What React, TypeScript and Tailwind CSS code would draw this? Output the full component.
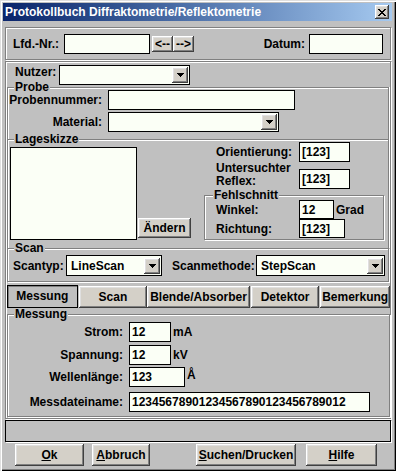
import React from "react";

const raised =
  "bg-[#d4d0c8] shadow-[inset_-1px_-1px_0_#404040,inset_1px_1px_0_#ffffff,inset_-2px_-2px_0_#808080,inset_2px_2px_0_#dfdfdf]";
const field = "bg-[#fbfff6] border border-black flex items-center pl-[2px] leading-none";
const etched = "border border-[#808080] shadow-[inset_1px_1px_0_#ffffff,1px_1px_0_#ffffff]";

function Arrow() {
  return (
    <svg width="7" height="4" viewBox="0 0 7 4" shapeRendering="crispEdges">
      <path d="M0 0H7V1H6V2H5V3H4V4H3V3H2V2H1V1H0Z" fill="#000" />
    </svg>
  );
}

function Combo({ className, value }: { className: string; value?: string }) {
  return (
    <div className={`bg-[#fbfff6] border border-black flex items-center justify-between ${className}`}>
      <span className="pl-[4px] leading-none">{value ?? ""}</span>
      <div className={`${raised} w-[16px] h-[16px] mr-[1px] flex items-center justify-center`}>
        <Arrow />
      </div>
    </div>
  );
}

function Legend({ children, className }: { children: React.ReactNode; className: string }) {
  return (
    <span className={`absolute -top-[6px] px-[1px] bg-[#c0c0c0] leading-[10px] ${className}`}>
      {children}
    </span>
  );
}

function Btn({ className, children }: { className: string; children: React.ReactNode }) {
  return (
    <div className={`${raised} flex items-center justify-center leading-none ${className}`}>
      {children}
    </div>
  );
}

export default function App() {
  return (
    <div className="w-[396px] h-[471px] bg-[#c0c0c0] p-[3px] flex flex-col font-['Liberation_Sans',Arial,sans-serif] font-bold text-[12px] text-black shadow-[inset_1px_1px_0_#dfdfdf,inset_2px_2px_0_#ffffff,inset_-1px_-1px_0_#000000,inset_-2px_-2px_0_#808080]">
      {/* Title bar */}
      <div className="h-[18px] w-[389px] bg-linear-to-r from-[#0a246a] to-[#a6caf0] flex items-center justify-between">
        <span className="text-white pl-[2px] leading-none">
          Protokollbuch Diffraktometrie/Reflektometrie
        </span>
        <div className={`${raised} w-[14px] h-[14px] mr-[3px] flex items-center justify-center`}>
          <svg width="8" height="7" viewBox="0 0 8 7" shapeRendering="crispEdges">
            <path
              d="M0 0H2V1H3V2H5V1H6V0H8V1H7V2H6V3H5V4H6V5H7V6H8V7H6V6H5V5H3V6H2V7H0V6H1V5H2V4H3V3H2V2H1V1H0Z"
              fill="#000"
            />
          </svg>
        </div>
      </div>

      {/* Panel A */}
      <div className={`${etched} ml-[2px] mt-[6px] w-[386px] h-[33px] flex items-center`}>
        <span className="ml-[7px] w-[51px] leading-none">Lfd.-Nr.:</span>
        <div className={`${field} w-[86px] h-[20px]`} />
        <Btn className="ml-[2px] w-[21px] h-[16px]">&lt;--</Btn>
        <Btn className="w-[21px] h-[16px]">--&gt;</Btn>
        <span className="ml-auto leading-none">Datum:</span>
        <div className={`${field} w-[74px] h-[20px] ml-[4px] mr-[7px]`} />
      </div>

      {/* Panel B */}
      <div className={`${etched} ml-[2px] mt-[1px] w-[386px] h-[358px] flex flex-col`}>
        {/* Nutzer */}
        <div className="mt-[3px] h-[20px] flex items-center">
          <span className="ml-[9px] w-[44px] leading-none -mt-[6px]">Nutzer:</span>
          <Combo className="w-[131px] h-[20px]" />
        </div>

        {/* Probe */}
        <div className="relative mt-[2px] mx-[1px] h-[52px] border-t border-x border-[#808080] shadow-[inset_1px_1px_0_#ffffff,1px_0_0_#ffffff] flex flex-col pt-[2px] gap-[2px]">
          <Legend className="left-[6px]">Probe</Legend>
          <div className="h-[20px] flex items-center">
            <span className="w-[94px] text-right leading-none">Probennummer:</span>
            <div className={`${field} w-[187px] h-[20px] ml-[6px]`} />
          </div>
          <div className="h-[20px] flex items-center">
            <span className="w-[94px] text-right leading-none">Material:</span>
            <Combo className="w-[171px] h-[20px] ml-[6px]" />
          </div>
        </div>

        {/* Lageskizze */}
        <div className="relative mx-[1px] h-[109px] border-t border-x border-[#808080] shadow-[inset_1px_1px_0_#ffffff,1px_0_0_#ffffff] flex">
          <Legend className="left-[6px]">Lageskizze</Legend>
          <div className="ml-[2px] mt-[7px] w-[127px] h-[93px] bg-[#fbfff6] border border-black" />
          <Btn className="ml-[1px] mt-[78px] w-[53px] h-[20px]">Ändern</Btn>
          <div className="ml-[13px] flex flex-col">
            <div className="mt-[2px] h-[20px] flex items-center">
              <span className="ml-[12px] w-[83px] leading-none">Orientierung:</span>
              <div className={`${field} w-[51px] h-[20px]`}>[123]</div>
            </div>
            <div className="h-[27px] flex items-start">
              <span className="ml-[12px] w-[83px] leading-[13px]">
                Untersuchter
                <br />
                Reflex:
              </span>
              <div className={`${field} w-[51px] h-[20px] mt-[7px]`}>[123]</div>
            </div>
            <div className={`${etched} relative mt-[6px] w-[180px] h-[45px] flex flex-col pt-[4px]`}>
              <Legend className="left-[8px]">Fehlschnitt</Legend>
              <div className="h-[19px] flex items-center">
                <span className="ml-[11px] w-[83px] leading-none">Winkel:</span>
                <div className={`${field} w-[35px] h-[19px]`}>12</div>
                <span className="ml-[2px] leading-none">Grad</span>
              </div>
              <div className="h-[19px] flex items-center">
                <span className="ml-[11px] w-[83px] leading-none">Richtung:</span>
                <div className={`${field} w-[46px] h-[19px]`}>[123]</div>
              </div>
            </div>
          </div>
        </div>

        {/* Scan */}
        <div className="relative mx-[1px] h-[34px] border border-[#808080] shadow-[inset_1px_1px_0_#ffffff,1px_1px_0_#ffffff] flex items-start">
          <Legend className="left-[6px]">Scan</Legend>
          <div className="mt-[6px] h-[21px] flex items-center">
            <span className="ml-[5px] w-[53px] leading-none">Scantyp:</span>
            <Combo className="w-[96px] h-[21px]" value="LineScan" />
            <span className="ml-[10px] w-[84px] leading-none">Scanmethode:</span>
            <Combo className="w-[129px] h-[21px]" value="StepScan" />
          </div>
        </div>

        {/* Tabs */}
        <div className="mt-[3px] ml-[1px] h-[23px] flex items-end">
          <div className="w-[71px] h-[23px] border border-black bg-[#c0c0c0] shadow-[inset_1px_1px_0_#808080] flex justify-center pt-[4px] leading-none">
            Messung
          </div>
          <Btn className="ml-[1px] w-[69px] h-[22px]">Scan</Btn>
          <Btn className="w-[103px] h-[22px]">Blende/Absorber</Btn>
          <Btn className="ml-[1px] w-[69px] h-[22px]">Detektor</Btn>
          <Btn className="ml-[1px] w-[70px] h-[22px]">Bemerkung</Btn>
        </div>

        {/* Messung group */}
        <div className={`${etched} relative mt-[6px] ml-[1px] w-[383px] h-[103px] flex flex-col pt-[7px]`}>
          <Legend className="left-[6px]">Messung</Legend>
          <div className="h-[20px] flex items-center">
            <span className="w-[115px] text-right leading-none">Strom:</span>
            <div className={`${field} ml-[6px] w-[42px] h-[20px]`}>12</div>
            <span className="ml-[2px] leading-none">mA</span>
          </div>
          <div className="mt-[3px] h-[20px] flex items-center">
            <span className="w-[115px] text-right leading-none">Spannung:</span>
            <div className={`${field} ml-[6px] w-[42px] h-[20px]`}>12</div>
            <span className="ml-[2px] leading-none">kV</span>
          </div>
          <div className="mt-[2px] h-[20px] flex items-center">
            <span className="w-[115px] text-right leading-none">Wellenlänge:</span>
            <div className={`${field} ml-[6px] w-[56px] h-[20px]`}>123</div>
            <span className="ml-[2px] leading-none self-start mt-[2px]">Å</span>
          </div>
          <div className="mt-[5px] h-[20px] flex items-center">
            <span className="w-[115px] text-right leading-none">Messdateiname:</span>
            <div className={`${field} ml-[6px] w-[241px] h-[20px]`}>12345678901234567890123456789012</div>
          </div>
        </div>
      </div>

      {/* Status bar */}
      <div className="ml-[2px] mt-[1px] w-[386px] h-[22px] border border-black shadow-[1px_1px_0_#ffffff]" />

      {/* Buttons */}
      <div className="mt-[2px] ml-[12px] h-[22px] flex">
        <Btn className="w-[69px] h-[22px]">
          <span>
            <u>O</u>k
          </span>
        </Btn>
        <Btn className="ml-[8px] w-[58px] h-[22px]">
          <span>
            <u>A</u>bbruch
          </span>
        </Btn>
        <Btn className="ml-[46px] w-[100px] h-[22px]">
          <span>
            <u>S</u>uchen/Drucken
          </span>
        </Btn>
        <Btn className="ml-[10px] w-[71px] h-[22px]">
          <span>
            <u>H</u>ilfe
          </span>
        </Btn>
      </div>
    </div>
  );
}
